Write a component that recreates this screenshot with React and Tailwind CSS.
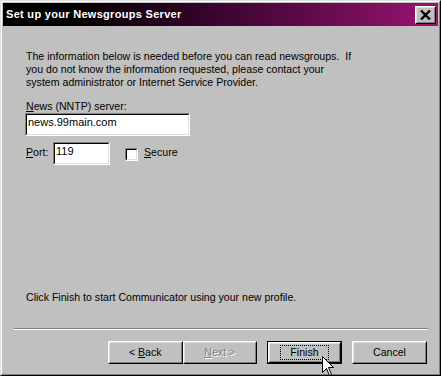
import React from 'react';

const font = { fontFamily: '"Liberation Sans", Arial, sans-serif' };

function Button({ children, isDefault, disabled }) {
    const bevel = (
        <div className="h-full w-full border border-t-white border-l-white border-r-black border-b-black">
            <div className="h-full w-full border border-t-[#dfdfdf] border-l-[#dfdfdf] border-r-[#808080] border-b-[#808080] flex items-center justify-center">
                {isDefault ? (
                    <div className="px-[9px] h-[15px] flex items-center border border-dotted border-black">{children}</div>
                ) : disabled ? (
                    <span className="text-[#808080] [text-shadow:1px_1px_0_#ffffff]">{children}</span>
                ) : (
                    children
                )}
            </div>
        </div>
    );
    return (
        <div className={`w-[75px] h-[23px] ${isDefault ? 'border border-black' : ''}`}>
            {bevel}
        </div>
    );
}

function Sunken({ className, children }) {
    return (
        <div className={`border border-t-[#808080] border-l-[#808080] border-r-white border-b-white ${className}`}>
            <div className="h-full w-full border border-t-black border-l-black border-r-[#dfdfdf] border-b-[#dfdfdf] bg-white">
                {children}
            </div>
        </div>
    );
}

export default function App() {
    return (
        <div className="relative w-[441px] h-[376px] text-[10.6px] leading-[13px] text-black select-none" style={font}>
            <div className="h-full w-full border border-t-[#dfdfdf] border-l-[#dfdfdf] border-r-black border-b-black">
                <div className="h-full w-full border border-t-white border-l-white border-r-[#808080] border-b-[#808080] bg-[#c0c0c0] p-px flex flex-col">
                    {/* title bar */}
                    <div className="h-[23px] flex items-center justify-between pl-[3px] pr-[2px] bg-gradient-to-r from-[#000000] via-[#3c0530] to-[#9a1472]">
                        <span className="text-white font-bold text-[11px] tracking-[0.3px]">Set up your Newsgroups Server</span>
                        <div className="w-[21px] h-[18px] border border-t-white border-l-white border-r-black border-b-black">
                            <div className="h-full w-full border border-t-[#dfdfdf] border-l-[#dfdfdf] border-r-[#808080] border-b-[#808080] bg-[#c0c0c0] flex items-center justify-center">
                                <svg width="11" height="10" viewBox="0 0 11 10">
                                    <path d="M1 0.5 L10 9.5 M10 0.5 L1 9.5" stroke="black" strokeWidth="2.4" />
                                </svg>
                            </div>
                        </div>
                    </div>

                    {/* body */}
                    <div className="flex-1 flex flex-col px-[11px] pt-[24px]">
                        <p className="pl-[12px] whitespace-pre">
                            The information below is needed before you can read newsgroups.  If{'\n'}
                            you do not know the information requested, please contact your{'\n'}
                            system administrator or Internet Service Provider.
                        </p>

                        <div className="pl-[12px] mt-[11px]">
                            <span className="underline">N</span>ews (NNTP) server:
                        </div>
                        <div className="pl-[11px]">
                            <Sunken className="w-[165px] h-[23px]">
                                <div className="pl-[1px] pt-[1px] text-[11px]">news.99main.com</div>
                            </Sunken>
                        </div>

                        <div className="flex items-start pl-[12px] mt-[6px]">
                            <span className="mt-[4px] w-[27px]"><span className="underline">P</span>ort:</span>
                            <Sunken className="w-[57px] h-[23px]">
                                <div className="pl-[1px] pt-[1px] text-[11px]">119</div>
                            </Sunken>
                            <Sunken className="ml-[15px] mt-[6px] w-[13px] h-[13px]" />
                            <span className="ml-[6px] mt-[4px]"><span className="underline">S</span>ecure</span>
                        </div>

                        <div className="pl-[12px] mt-[126px]">
                            Click Finish to start Communicator using your new profile.
                        </div>

                        <div className="mt-[24px] border-t border-t-[#808080] border-b border-b-white mr-[-1px]" />

                        <div className="flex mt-[11px] pl-[94px]">
                            <Button><span>&lt; <span className="underline">B</span>ack</span></Button>
                            <Button disabled><span><span className="underline">N</span>ext &gt;</span></Button>
                            <div className="ml-[10px]">
                                <Button isDefault>Finish</Button>
                            </div>
                            <div className="ml-[10px]">
                                <Button>Cancel</Button>
                            </div>
                        </div>
                    </div>
                </div>
            </div>

            {/* mouse cursor */}
            <svg className="absolute left-[322px] top-[356px]" width="13" height="20" viewBox="0 0 13 20">
                <path d="M0.5 0.5 L0.5 16.5 L4.5 12.5 L7.5 19.5 L9.5 18.5 L6.5 11.5 L11.5 11.5 Z" fill="white" stroke="black" strokeWidth="1" />
            </svg>
        </div>
    );
}
